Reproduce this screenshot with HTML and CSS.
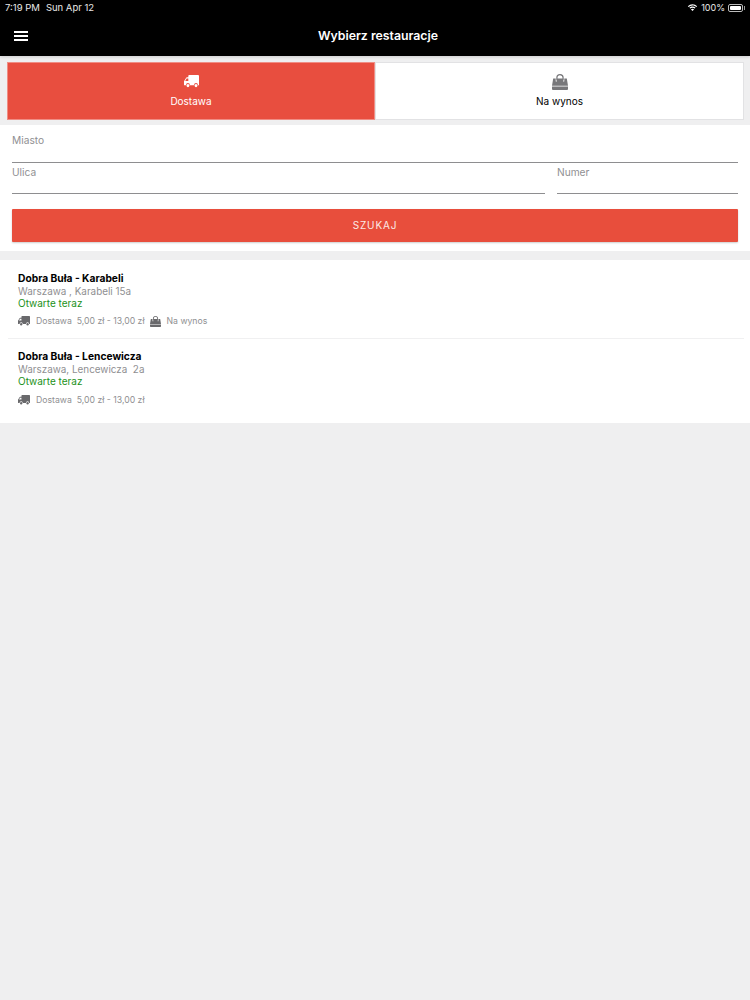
FILE: index.html
```html
<!DOCTYPE html>
<html lang="pl">
<head>
<meta charset="utf-8">
<title>Wybierz restauracje</title>
<link rel="stylesheet" href="styles.css">
</head>
<body>
<svg class="defs" width="0" height="0" aria-hidden="true">
  <symbol id="truck" viewBox="0 0 16 12" preserveAspectRatio="none"><path d="M5.500 0H15a1 1 0 0 1 1 1v8.500h-1.100a2.100 2.100 0 0 0-4.200 0H6.300a2.100 2.100 0 0 0-4.200 0H.6A.6.6 0 0 1 0 8.900V5.800L2.300 2.500A1 1 0 0 1 3.100 2H4.600V1A1 1 0 0 1 5.500 0ZM2.800 3.300 1.300 5.500H4.600V3.300Z" fill-rule="evenodd"/><circle cx="4.200" cy="9.800" r="1.500"/><circle cx="12.800" cy="9.800" r="1.500"/></symbol>
  <symbol id="bag" viewBox="0 0 16 16" preserveAspectRatio="none"><path d="M4.300 6.500V3.700a3.700 3.700 0 0 1 7.400 0V6.500h-1.200V3.700a2.500 2.500 0 0 0-5 0V6.500Z"/><path d="M1.200 4.500h2.500v3h1.200v-3h6.200v3h1.200v-3h2.500L16 11.700H0Z"/><path d="M0 12.500h16V15a1 1 0 0 1-1 1H1a1 1 0 0 1-1-1Z"/></symbol>
</svg>
<header class="topbar">
  <div class="status">
    <div class="status-left"><span>7:19 PM</span><span>Sun Apr 12</span></div>
    <div class="status-right">
      <svg class="wifi" viewBox="0 0 16 12"><path d="M8 2.200c2.300 0 4.300.9 5.800 2.300l1.200-1.300A10.200 10.200 0 0 0 8 .400 10.200 10.200 0 0 0 1 3.200l1.200 1.300A8.400 8.400 0 0 1 8 2.200Z"/><path d="M8 5.600c1.300 0 2.500.5 3.400 1.300l1.200-1.300A6.700 6.700 0 0 0 8 3.800c-1.800 0-3.400.7-4.600 1.800l1.200 1.300A5 5 0 0 1 8 5.600Z"/><path d="M8 7.200c-.9 0-1.700.3-2.300.9L8 10.500l2.300-2.400c-.6-.6-1.400-.9-2.300-.9Z"/></svg>
      <span class="percent">100%</span>
      <span class="battery"><span class="battery-fill"></span></span>
    </div>
  </div>
  <div class="navbar">
    <button class="menu" aria-label="Menu"><span></span><span></span><span></span></button>
    <h1>Wybierz restauracje</h1>
  </div>
</header>

<div class="tabs">
  <div class="tab tab-active"><svg class="tab-icon"><use href="#truck"/></svg><span>Dostawa</span></div>
  <div class="tab tab-other"><svg class="tab-icon tab-icon-bag"><use href="#bag"/></svg><span>Na wynos</span></div>
</div>

<section class="form">
  <div class="field"><label>Miasto</label></div>
  <div class="row">
    <div class="field field-street"><label>Ulica</label></div>
    <div class="field field-number"><label>Numer</label></div>
  </div>
  <button class="search">SZUKAJ</button>
</section>

<section class="list">
  <article class="item">
    <h2>Dobra Buła - Karabeli</h2>
    <p class="address">Warszawa , Karabeli 15a</p>
    <p class="open">Otwarte teraz</p>
    <div class="meta">
      <svg class="meta-icon"><use href="#truck"/></svg><span>Dostawa&nbsp; 5,00 zł - 13,00 zł</span>
      <svg class="meta-icon meta-bag"><use href="#bag"/></svg><span>Na wynos</span>
    </div>
  </article>
  <article class="item">
    <h2>Dobra Buła - Lencewicza</h2>
    <p class="address">Warszawa, Lencewicza&nbsp; 2a</p>
    <p class="open">Otwarte teraz</p>
    <div class="meta">
      <svg class="meta-icon"><use href="#truck"/></svg><span>Dostawa&nbsp; 5,00 zł - 13,00 zł</span>
    </div>
  </article>
</section>
</body>
</html>
```
FILE: styles.css
```css
* { box-sizing: border-box; }
html, body { height: 100%; }
body {
  margin: 0;
  background: #efeff0;
  font-family: Inter, "Liberation Sans", sans-serif;
  color: #000;
  overflow: hidden;
}
.defs { position: absolute; }
h1, h2, p { margin: 0; font-weight: normal; }

.topbar { height: 56px; background: #000; color: #fff; box-shadow: 0 1px 3px rgba(0,0,0,.15); }
.status {
  height: 15px;
  padding: 0 5px;
  display: flex;
  justify-content: space-between;
  align-items: center;
  font-size: 9.500px;
  color: #e8e8e8;
}
.status-left { display: flex; gap: 6px; }
.status-right { display: flex; align-items: center; gap: 3px; }
.wifi { width: 11px; height: 8px; fill: #fff; }
.percent { font-size: 9px; }
.battery {
  position: relative;
  width: 15px;
  height: 8px;
  margin-right: 2px;
  border: 1px solid #bbb;
  border-radius: 2px;
  padding: 1px;
  display: block;
}
.battery::after {
  content: "";
  position: absolute;
  right: -3px;
  top: 1px;
  width: 1.500px;
  height: 4px;
  background: #999;
}
.battery-fill { display: block; height: 100%; background: #fff; border-radius: 1px; }

.navbar { height: 41px; position: relative; display: flex; align-items: center; justify-content: center; padding-left: 6px; }
.navbar h1 { font-size: 12.300px; font-weight: 600; }
.menu {
  position: absolute;
  left: 14px;
  top: 16px;
  width: 14px;
  padding: 0;
  border: 0;
  background: none;
  display: flex;
  flex-direction: column;
  gap: 2.500px;
}
.menu span { display: block; height: 1.500px; background: #fff; }

.tabs { display: flex; margin: 6px 6px 0 7px; height: 58px; }
.tab {
  background: #fff;
  border: 1px solid #e2e2e4;
  display: flex;
  flex-direction: column;
  align-items: center;
  font-size: 10px;
  padding-top: 12px;
}
.tab-active { width: 368px; background: #e84e3f; border-color: #f08d84; color: #fff; }
.tab-other { flex: 1; }
.tab-icon { width: 15px; height: 13px; fill: #fff; margin-bottom: 7px; }
.tab-icon-bag { fill: #77777a; width: 16px; height: 16px; margin-top: -1px; margin-bottom: 5px; }

.form { margin-top: 5px; height: 126px; background: #fff; padding: 0 12px; }
.field { border-bottom: 1px solid #8e8e90; height: 38px; padding-top: 9px; }
.field label { display: block; font-size: 10.200px; line-height: 13px; color: #8f8f92; }
.row { display: flex; gap: 12px; }
.row .field { height: 31px; padding-top: 3px; }
.field-street { flex: 1; }
.field-number { width: 181px; }
.search {
  display: block;
  width: 100%;
  height: 33px;
  margin-top: 15px;
  padding: 0 0 2px;
  border: 0;
  border-radius: 1px;
  background: #e84e3c;
  color: #fbe9e6;
  font: 10px Inter, "Liberation Sans", sans-serif;
  letter-spacing: .85px;
  box-shadow: 0 1px 2px rgba(0,0,0,.2);
}

.list { margin-top: 9px; height: 163px; background: #fff; padding: 0 6px 0 8px; }
.item { height: 79px; padding: 12px 10px 0; border-bottom: 1px solid #f0f0f1; }
.item:last-child { border-bottom: 0; padding-top: 11px; }
.item h2 { font-size: 10.250px; font-weight: 700; line-height: 13px; }
.address { font-size: 9.900px; line-height: 12px; color: #8f8f92; }
.open { font-size: 10px; line-height: 13px; margin-top: -0.5px; color: #1c9120; }
.meta {
  display: flex;
  align-items: center;
  margin-top: 5.500px;
  height: 12px;
  font-size: 8.700px;
  color: #8f8f92;
}
.item:last-child .meta { margin-top: 6.500px; }
.meta-icon { width: 12px; height: 10px; fill: #69696c; margin-right: 6px; }
.meta-bag { width: 11px; height: 11px; margin-left: 5px; margin-right: 6px; }
```
